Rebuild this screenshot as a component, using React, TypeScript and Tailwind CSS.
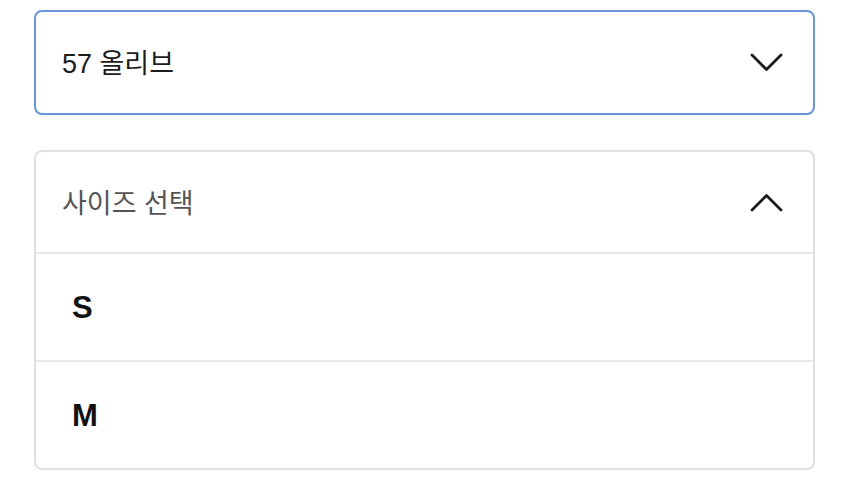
import React from "react";

const Chevron = ({ up }: { up?: boolean }) => (
  <svg width="33" height="19" viewBox="0 0 33 19" fill="none" className="shrink-0">
    <path
      d={up ? "M2 17L16.5 2.5L31 17" : "M2 2L16.5 16.5L31 2"}
      stroke="#1a1a1a"
      strokeWidth="2.8"
      strokeLinecap="round"
      strokeLinejoin="round"
    />
  </svg>
);

export default function App() {
  return (
    <div
      className="w-[850px] h-[487px] bg-white pt-[10px] pl-[34px]"
      style={{ fontFamily: '"Liberation Sans", "Noto Sans CJK KR", sans-serif' }}
    >
      <div className="w-[781px] h-[105px] border-2 border-[#6b93d8] rounded-[8px] flex items-center justify-between pl-[26px] pr-[30px]">
        <span className="text-[27px] text-[#1c1c1c] leading-none pt-[4px]">57 올리브</span>
        <Chevron />
      </div>
      <div className="mt-[35px] w-[781px] border-2 border-[#e0e0e0] rounded-[8px] flex flex-col">
        <div className="h-[102px] flex items-center justify-between pl-[26px] pr-[30px] border-b-2 border-[#e8e8e8]">
          <span className="text-[27px] text-[#555555] leading-none pt-[4px]">사이즈 선택</span>
          <Chevron up />
        </div>
        <div className="h-[108px] flex items-center pl-[36px] border-b-2 border-[#e8e8e8]">
          <span className="text-[31px] font-bold text-[#111111] leading-none">S</span>
        </div>
        <div className="h-[106px] flex items-center pl-[36px]">
          <span className="text-[31px] font-bold text-[#111111] leading-none">M</span>
        </div>
      </div>
    </div>
  );
}
